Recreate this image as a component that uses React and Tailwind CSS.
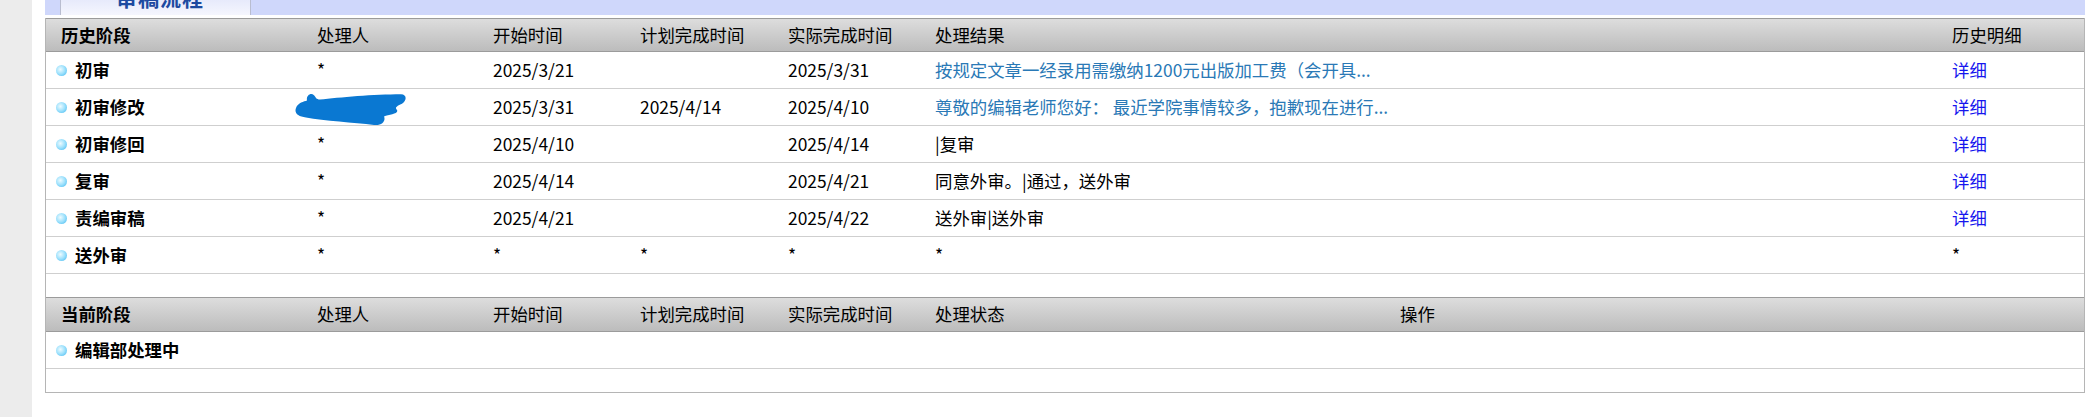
const HISTORY = [
  { stage: '初审', handler: '*', start: '2025/3/21', plan: '', done: '2025/3/31', result: '按规定文章一经录用需缴纳1200元出版加工费（会开具...', link: true, detail: '详细' },
  { stage: '初审修改', handler: null, start: '2025/3/31', plan: '2025/4/14', done: '2025/4/10', result: '尊敬的编辑老师您好： 最近学院事情较多，抱歉现在进行...', link: true, detail: '详细' },
  { stage: '初审修回', handler: '*', start: '2025/4/10', plan: '', done: '2025/4/14', result: '|复审', detail: '详细' },
  { stage: '复审', handler: '*', start: '2025/4/14', plan: '', done: '2025/4/21', result: '同意外审。|通过，送外审', detail: '详细' },
  { stage: '责编审稿', handler: '*', start: '2025/4/21', plan: '', done: '2025/4/22', result: '送外审|送外审', detail: '详细' },
  { stage: '送外审', handler: '*', start: '*', plan: '*', done: '*', result: '*', detail: '*', plain: true },
];

const HIST_COLS = 'grid grid-cols-[256px_176px_147px_148px_147px_1fr_147px]';
const CUR_COLS = 'grid grid-cols-[256px_176px_147px_148px_147px_465px_1fr]';

function Bullet() {
  return (
    <span className="mr-[8px] ml-[-5px] inline-block h-[11px] w-[11px] shrink-0 rounded-full bg-[radial-gradient(circle_at_40%_40%,#eefbff_0%,#9be0fc_50%,#3ab4ee_100%)]" />
  );
}

function Scribble() {
  return (
    <svg className="absolute left-[-8px] top-[2px]" width="112" height="36" viewBox="0 0 112 34" preserveAspectRatio="none">
      <path
        d="M2 16 C4 11 10 10 13 9 C12 4 17 1 20 4 C22 6 22 8 26 8 C45 6 80 3 107 3 C113 3 113 9 108 12 C104 14 100 15 103 18 C105 22 95 22 90 24 C92 28 88 33 80 32 C60 30 30 28 12 25 C4 24 0 21 2 16 Z"
        fill="#0a78d2"
      />
    </svg>
  );
}

function Cell({ children, className = '' }) {
  return <div className={`flex items-center pl-[15px] whitespace-nowrap ${className}`}>{children}</div>;
}

function HeaderRow({ cols, labels, first, top }) {
  return (
    <div
      className={`${cols} ${top ? 'h-[34px]' : 'h-[35px]'} border-y border-[#9b9b9b] bg-gradient-to-b from-[#dddddd] to-[#bcbcbc]`}
    >
      <Cell className="font-bold">{first}</Cell>
      {labels.map((label, i) => (
        <Cell key={i}>{label}</Cell>
      ))}
    </div>
  );
}

export default function App() {
  return (
    <div
      className="flex h-[417px] w-[2097px] bg-white text-[17.4px] text-black"
      style={{ fontFamily: '"Noto Sans CJK SC", "Microsoft YaHei", sans-serif' }}
    >
      <div className="h-full w-[32px] bg-[#ececec]" />

      <div className="ml-[13px] w-[2040px]">
        <div className="h-[15px] bg-[#cfd7fb] pl-[15px]">
          <div className="h-[15px] w-[191px] overflow-hidden border-x border-[#b9bdd0] bg-gradient-to-b from-[#e7eafb] to-[#f5f6fe] pl-[55px]">
            <p className="mt-[-14px] text-[21px] font-bold leading-[22px] tracking-[1px] text-[#1d4aa0]">审稿流程</p>
          </div>
        </div>
        <div className="h-[3px]" />

        <div className="border-x border-b border-[#b5b5b5]">
          <HeaderRow
            top
            cols={HIST_COLS}
            first="历史阶段"
            labels={['处理人', '开始时间', '计划完成时间', '实际完成时间', '处理结果', '历史明细']}
          />

          {HISTORY.map((row) => (
            <div key={row.stage} className={`${HIST_COLS} h-[37px] border-b border-[#cfcfcf]`}>
              <Cell className="font-bold">
                <Bullet />
                {row.stage}
              </Cell>
              <Cell className="relative">{row.handler ?? <Scribble />}</Cell>
              <Cell>{row.start}</Cell>
              <Cell>{row.plan}</Cell>
              <Cell>{row.done}</Cell>
              <Cell className={row.link ? 'text-[#2a79b6]' : ''}>{row.result}</Cell>
              <Cell className={row.plain ? '' : 'text-[#1616ee]'}>{row.detail}</Cell>
            </div>
          ))}

          <div className="h-[23px]" />

          <HeaderRow
            cols={CUR_COLS}
            first="当前阶段"
            labels={['处理人', '开始时间', '计划完成时间', '实际完成时间', '处理状态', '操作']}
          />

          <div className={`${CUR_COLS} h-[37px] border-b border-[#cfcfcf]`}>
            <Cell className="font-bold">
              <Bullet />
              编辑部处理中
            </Cell>
          </div>

          <div className="h-[23px]" />
        </div>
      </div>
    </div>
  );
}
